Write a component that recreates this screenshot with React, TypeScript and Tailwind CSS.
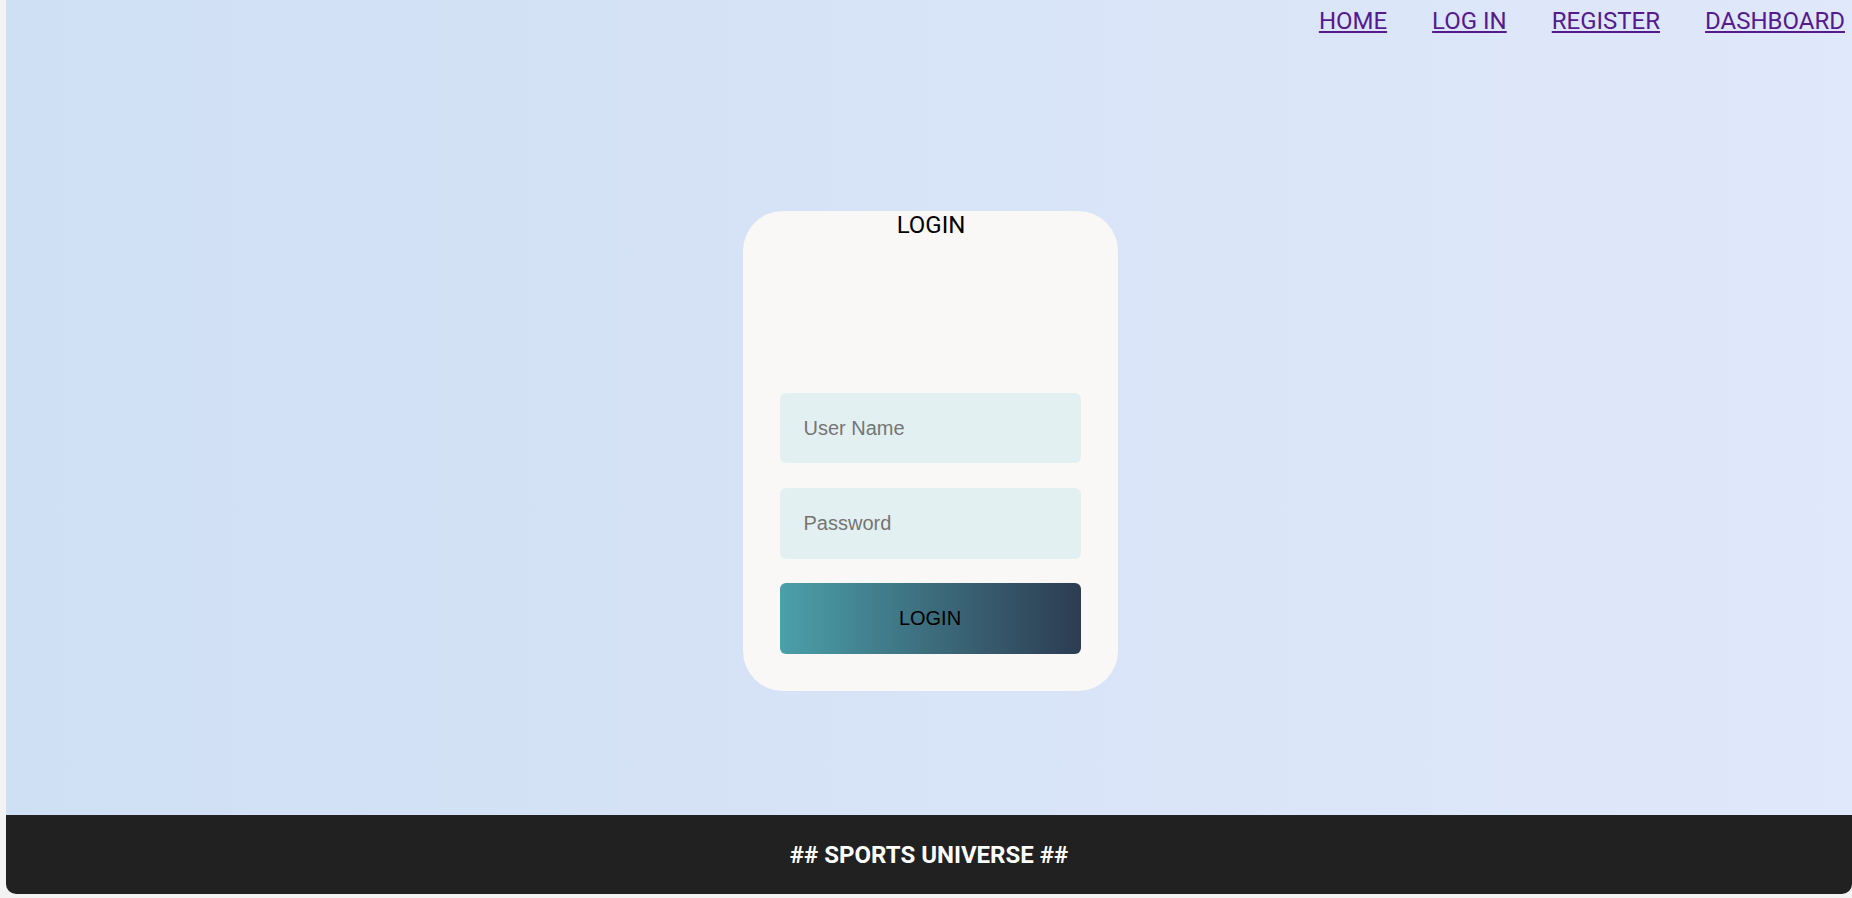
export default function App() {
  const links = ["HOME", "LOG IN", "REGISTER", "DASHBOARD"];

  return (
    <div className="h-[898px] w-full overflow-hidden bg-[#f3f3f3] pl-[6px] pb-[4px]">
      <div className="flex h-full flex-col overflow-hidden rounded-b-[10px]">
        <main className="flex flex-1 flex-col bg-gradient-to-r from-[#cfdff4] to-[#e0e8fb]">
          <nav className="flex h-[40px] justify-end gap-[45px] pr-[7px] pt-[7px] font-['Roboto',sans-serif] text-[24px] leading-[28px]">
            {links.map((l) => (
              <a key={l} href="#" className="text-[#551a8b] underline">
                {l}
              </a>
            ))}
          </nav>

          <div className="flex justify-center pt-[171px] pl-[2px]">
            <form className="flex w-[375px] flex-col rounded-[40px] bg-[#f9f8f7] px-[37px] pb-[37px]">
              <h2 className="pl-[2px] text-center font-['Roboto',sans-serif] text-[24px] leading-[28px] text-black">LOGIN</h2>
              <input
                type="text"
                placeholder="User Name"
                className="mt-[154px] h-[70px] w-full rounded-[6px] bg-[#e3f0f1] pl-[24px] font-['Liberation_Sans',Arial,sans-serif] text-[20px] outline-none placeholder:text-[#757575]"
              />
              <input
                type="password"
                placeholder="Password"
                className="mt-[25px] h-[71px] w-full rounded-[6px] bg-[#e3f0f1] pl-[24px] font-['Liberation_Sans',Arial,sans-serif] text-[20px] outline-none placeholder:text-[#757575]"
              />
              <button
                type="button"
                className="mt-[24px] h-[71px] w-full rounded-[6px] bg-gradient-to-r from-[#4aa0aa] to-[#2c3d52] pb-[2px] font-['Liberation_Sans',Arial,sans-serif] text-[20px] text-black"
              >
                LOGIN
              </button>
            </form>
          </div>
        </main>

        <footer className="flex h-[79px] items-center justify-center bg-[#212121] font-['Roboto',sans-serif] text-[24px] font-bold text-white">
          ## SPORTS UNIVERSE ##
        </footer>
      </div>
    </div>
  );
}
